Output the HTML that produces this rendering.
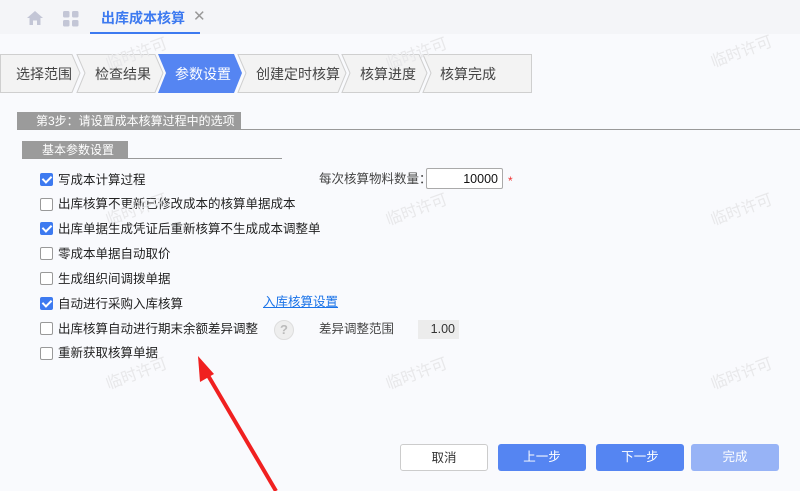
<!DOCTYPE html><html><head><meta charset="utf-8"><style>
body{margin:0;width:800px;height:491px;background:#f9fafd;font-family:"Liberation Sans","Noto Sans CJK SC",sans-serif;position:relative;overflow:hidden;font-size:13px;color:#333}
.a{position:absolute;line-height:16px}
.cb{position:absolute;left:40px;width:13px;height:13px;border:1px solid #999;border-radius:2px;background:#fff;box-sizing:border-box}
.cb.on{background:#3d7af0;border-color:#3d7af0}
.cb.on:after{content:"";position:absolute;left:3px;top:0px;width:4px;height:7px;border:solid #fff;border-width:0 2px 2px 0;transform:rotate(45deg)}
.lb{position:absolute;left:58px;font-size:12.5px;color:#222;line-height:16px}
.wm{position:absolute;color:#e8e8ea;font-size:16px;transform:rotate(-20deg)}
.btn{position:absolute;top:444px;height:27px;width:88px;border-radius:3px;text-align:center;line-height:27px;font-size:12.5px;box-sizing:border-box}
</style></head><body>
<div class="a" style="left:0;top:0;width:800px;height:34px;background:#f4f5f8"></div>
<svg class="a" style="left:26px;top:10px" width="18" height="16"><path d="M9 1 L1 8 H3.5 V15 H7 V10.5 H11 V15 H14.5 V8 H17 Z" fill="#c3c6d6"/></svg>
<svg class="a" style="left:63px;top:11px" width="16" height="16"><rect x="0" y="0" width="6.5" height="6.5" rx="1.5" fill="#c3c6d6"/><rect x="9" y="0" width="6.5" height="6.5" rx="1.5" fill="#c3c6d6"/><rect x="0" y="9" width="6.5" height="6.5" rx="1.5" fill="#c3c6d6"/><rect x="9" y="9" width="6.5" height="6.5" rx="1.5" fill="#c3c6d6"/></svg>
<div class="a" style="left:101px;top:10px;font-size:14px;color:#3d7af0;font-weight:bold">出库成本核算</div>
<div class="a" style="left:193px;top:9px;font-size:15px;color:#999">✕</div>
<div class="a" style="left:90px;top:32px;width:110px;height:2px;background:#3d7af0"></div>
<svg class="a" style="left:0;top:54px" width="540" height="40">
<g stroke="#cfcfcf" stroke-width="1" fill="#f3f3f3">
<polygon points="0.5,0.5 72,0.5 80,19 72,38.5 0.5,38.5"/>
<polygon points="77,0.5 155,0.5 163,19 155,38.5 77,38.5 85,19"/>
<polygon points="238,0.5 338,0.5 346,19 338,38.5 238,38.5 246,19"/>
<polygon points="342,0.5 419,0.5 427,19 419,38.5 342,38.5 350,19"/>
<polygon points="423,0.5 531.5,0.5 531.5,38.5 423,38.5 431,19"/>
</g>
<polygon points="158,0 234,0 242,19 234,39 158,39 166,19" fill="#5585f2"/>
<g font-size="14" fill="#444" font-family="Liberation Sans,Noto Sans CJK SC,sans-serif">
<text x="16" y="25">选择范围</text><text x="95" y="25">检查结果</text>
<text x="175" y="25" fill="#fff">参数设置</text><text x="256" y="25">创建定时核算</text>
<text x="360" y="25">核算进度</text><text x="440" y="25">核算完成</text></g></svg>
<div class="a" style="left:17px;top:112px;width:224px;height:18px;background:#9b9b9b;color:#fff;font-size:12px;line-height:18px;padding-left:19px;box-sizing:border-box">第3步：请设置成本核算过程中的选项</div>
<div class="a" style="left:17px;top:129px;width:783px;height:1px;background:#999"></div>
<div class="a" style="left:22px;top:141px;width:106px;height:18px;background:#9b9b9b;color:#fff;font-size:12px;line-height:18px;padding-left:20px;box-sizing:border-box">基本参数设置</div>
<div class="a" style="left:22px;top:158px;width:260px;height:1px;background:#999"></div>
<div class="cb on" style="top:173px"></div><div class="lb" style="top:172px">写成本计算过程</div>
<div class="cb" style="top:198px"></div><div class="lb" style="top:196px">出库核算不更新已修改成本的核算单据成本</div>
<div class="cb on" style="top:222px"></div><div class="lb" style="top:221px">出库单据生成凭证后重新核算不生成成本调整单</div>
<div class="cb" style="top:247px"></div><div class="lb" style="top:246px">零成本单据自动取价</div>
<div class="cb" style="top:272px"></div><div class="lb" style="top:271px">生成组织间调拨单据</div>
<div class="cb on" style="top:297px"></div><div class="lb" style="top:296px">自动进行采购入库核算</div>
<div class="cb" style="top:322px"></div><div class="lb" style="top:321px">出库核算自动进行期末余额差异调整</div>
<div class="cb" style="top:347px"></div><div class="lb" style="top:345px">重新获取核算单据</div>
<div class="a" style="left:263px;top:294px;color:#1a73e8;text-decoration:underline;font-size:12.5px">入库核算设置</div>
<div class="a" style="left:274px;top:320px;width:18px;height:18px;border-radius:50%;background:#eee;border:1px solid #ddd;color:#bbb;text-align:center;line-height:18px;font-weight:bold;font-size:13px">?</div>
<div class="a" style="left:319px;top:321px;font-size:12.5px;color:#444">差异调整范围</div>
<div class="a" style="left:418px;top:320px;width:41px;height:19px;background:#ececec;text-align:right;line-height:19px;padding-right:4px;box-sizing:border-box;font-size:12.5px">1.00</div>
<div class="a" style="left:319px;top:171px;font-size:12.5px;color:#444">每次核算物料数量：</div>
<div class="a" style="left:426px;top:168px;width:77px;height:21px;border:1px solid #aaa;border-radius:2px;background:#fff;text-align:right;line-height:21px;padding-right:4px;box-sizing:border-box;font-size:12.5px;color:#111">10000</div>
<div class="a" style="left:508px;top:173px;color:#e33;font-size:12px">*</div>
<div class="btn" style="left:400px;border:1px solid #ccc;background:#fff;color:#333">取消</div>
<div class="btn" style="left:498px;background:#5585f2;color:#fff">上一步</div>
<div class="btn" style="left:596px;background:#5585f2;color:#fff">下一步</div>
<div class="btn" style="left:691px;background:#97b3f6;color:#fff">完成</div>
<svg class="a" style="left:0;top:0" width="800" height="491"><line x1="276" y1="491" x2="206" y2="372" stroke="#f02020" stroke-width="4"/><polygon points="198,356 200,382 214,374" fill="#f02020"/></svg>
<div class="wm" style="left:104px;top:40px">临时许可</div><div class="wm" style="left:384px;top:40px">临时许可</div><div class="wm" style="left:709px;top:38px">临时许可</div>
<div class="wm" style="left:104px;top:196px">临时许可</div><div class="wm" style="left:384px;top:196px">临时许可</div><div class="wm" style="left:709px;top:196px">临时许可</div>
<div class="wm" style="left:104px;top:360px">临时许可</div><div class="wm" style="left:384px;top:360px">临时许可</div><div class="wm" style="left:709px;top:360px">临时许可</div>
</body></html>
